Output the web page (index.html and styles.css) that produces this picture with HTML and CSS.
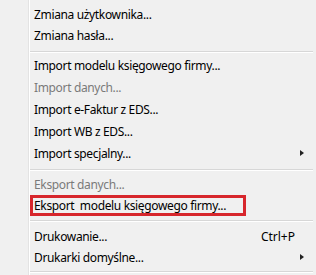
FILE: index.html
```html
<!DOCTYPE html>
<html lang="pl">
<head>
<meta charset="utf-8">
<link rel="stylesheet" href="styles.css">
</head>
<body>
<div class="menu">
  <div class="item h21"><span class="label">Zmiana użytkownika...</span></div>
  <div class="item h21"><span class="label">Zmiana hasła...</span></div>
  <div class="sep s1"></div>
  <div class="item h22"><span class="label">Import modelu księgowego firmy...</span></div>
  <div class="item h22 disabled"><span class="label">Import danych...</span></div>
  <div class="item h22"><span class="label">Import e-Faktur z EDS...</span></div>
  <div class="item h22"><span class="label">Import WB z EDS...</span></div>
  <div class="item h22"><span class="label">Import specjalny...</span><span class="arrow"></span></div>
  <div class="sep s2"></div>
  <div class="item h21 disabled"><span class="label">Eksport danych...</span></div>
  <div class="item h21 marked"><span class="box">Eksport&nbsp; modelu księgowego firmy...</span></div>
  <div class="sep s3"></div>
  <div class="item h21"><span class="label">Drukowanie...</span><span class="shortcut">Ctrl+P</span></div>
  <div class="item h20"><span class="label">Drukarki domyślne...</span><span class="arrow"></span></div>
  <div class="sep s3"></div>
</div>
</body>
</html>
```

FILE: styles.css
```css
html, body {
  margin: 0;
  padding: 0;
  background: #f0f0f0;
}
.menu {
  width: 316px;
  height: 275px;
  overflow: hidden;
  padding-top: 4px;
  box-sizing: border-box;
  display: flex;
  flex-direction: column;
  font-family: "Noto Sans", "Open Sans", sans-serif;
  font-size: 12px;
  letter-spacing: -0.35px;
  color: #000;
  background: linear-gradient(to right, #f0f0f0 0 28px, #e3e3e3 28px 29px, #ffffff 29px 30px, #f0f0f0 30px);
}
.item {
  display: flex;
  align-items: center;
  padding-left: 34px;
  padding-right: 12px;
  flex: none;
  white-space: nowrap;
}
.h20 { height: 20px; }
.h21 { height: 21px; }
.h22 { height: 22px; }
.label { flex: 1; }
.disabled { color: #7a7a7a; }
.shortcut {
  margin-right: 9px;
  letter-spacing: 0;
}
.arrow {
  width: 0;
  height: 0;
  border-top: 3.5px solid transparent;
  border-bottom: 3.5px solid transparent;
  border-left: 4px solid #222;
}
.marked {
  padding-left: 30px;
}
.box {
  box-sizing: border-box;
  width: 216px;
  height: 21px;
  border: 3px solid #d7262c;
  padding-left: 1px;
  display: flex;
  align-items: center;
}
.sep {
  flex: none;
  margin-left: 30px;
  margin-right: 3px;
  height: 0;
  border-top: 1px solid #d7d7d7;
  border-bottom: 1px solid #ffffff;
}
.s1 { margin-top: 5px; margin-bottom: 1px; }
.s2 { margin-top: 5px; margin-bottom: 3px; }
.s3 { margin-top: 4px; margin-bottom: 4px; }
```
